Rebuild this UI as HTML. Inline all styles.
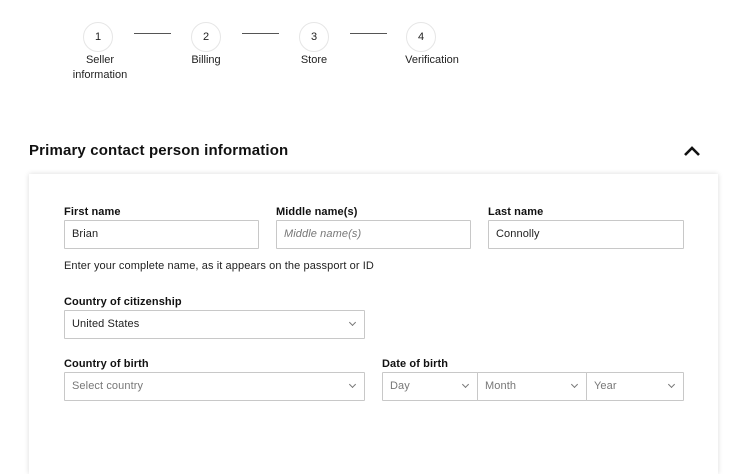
<!DOCTYPE html>
<html><head><style>
*{box-sizing:border-box;margin:0;padding:0}
body{width:750px;height:450px;background:#fff;font-family:"Liberation Sans",sans-serif;color:#111;position:relative;overflow:hidden}
.a{position:absolute}
.c{width:30px;height:30px;border:1px solid #e6e6e6;border-radius:50%;text-align:center;line-height:28px;font-size:11px;color:#222}
.ln{height:1px;background:#555}
.st{font-size:11px;text-align:center;line-height:15px;color:#222}
.lb{font-size:11px;font-weight:bold;color:#111;letter-spacing:.1px}
.in{border:1px solid #c8c8c8;height:29px;font-size:11px;line-height:27px;padding-left:7px;color:#222;border-radius:1px;letter-spacing:.1px}
.ph{color:#777}
.chev{position:absolute;right:9px;top:9px;width:5px;height:5px;border-right:1px solid #777;border-bottom:1px solid #777;transform:rotate(45deg)}
</style></head><body>
<div class="a c" style="left:83px;top:22px">1</div>
<div class="a c" style="left:191px;top:22px">2</div>
<div class="a c" style="left:299px;top:22px">3</div>
<div class="a c" style="left:406px;top:22px">4</div>
<div class="a ln" style="left:134px;top:33px;width:37px"></div>
<div class="a ln" style="left:242px;top:33px;width:37px"></div>
<div class="a ln" style="left:350px;top:33px;width:37px"></div>
<div class="a st" style="left:60px;top:53px;width:80px">Seller<br>information</div>
<div class="a st" style="left:166px;top:53px;width:80px">Billing</div>
<div class="a st" style="left:274px;top:53px;width:80px">Store</div>
<div class="a st" style="left:392px;top:53px;width:80px">Verification</div>
<div class="a" style="left:29px;top:142px;font-size:15px;font-weight:bold;color:#111;letter-spacing:.15px">Primary contact person information</div>
<svg class="a" style="left:683px;top:145px" width="18" height="12"><path d="M2 10 L9 3 L16 10" fill="none" stroke="#111" stroke-width="2.6"/></svg>
<div class="a" style="left:29px;top:174px;width:689px;height:300px;background:#fff;box-shadow:0 0 5px rgba(0,0,0,.15)"></div>
<div class="a lb" style="left:64px;top:206px">First name</div>
<div class="a lb" style="left:276px;top:206px">Middle name(s)</div>
<div class="a lb" style="left:488px;top:206px">Last name</div>
<div class="a in" style="left:64px;top:220px;width:195px">Brian</div>
<div class="a in ph" style="left:276px;top:220px;width:195px;font-style:italic">Middle name(s)</div>
<div class="a in" style="left:488px;top:220px;width:196px">Connolly</div>
<div class="a" style="left:64px;top:260px;font-size:11px;color:#222;letter-spacing:.1px">Enter your complete name, as it appears on the passport or ID</div>
<div class="a lb" style="left:64px;top:296px">Country of citizenship</div>
<div class="a in" style="left:64px;top:310px;width:301px">United States<span class="chev"></span></div>
<div class="a lb" style="left:64px;top:358px">Country of birth</div>
<div class="a in ph" style="left:64px;top:372px;width:301px">Select country<span class="chev"></span></div>
<div class="a lb" style="left:382px;top:358px">Date of birth</div>
<div class="a in ph" style="left:382px;top:372px;width:96px">Day<span class="chev"></span></div>
<div class="a in ph" style="left:477px;top:372px;width:110px">Month<span class="chev"></span></div>
<div class="a in ph" style="left:586px;top:372px;width:98px">Year<span class="chev"></span></div>
</body></html>
